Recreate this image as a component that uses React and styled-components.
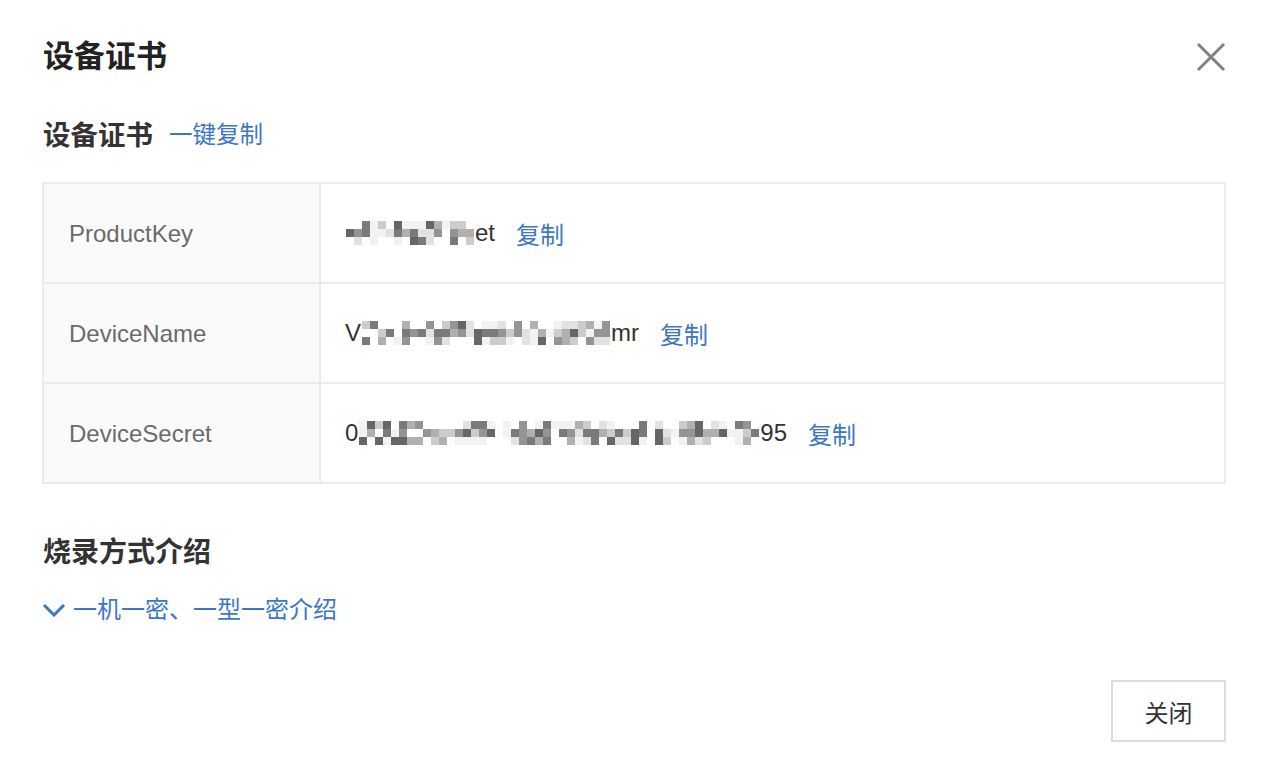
import React from "react";
import styled, { createGlobalStyle } from "styled-components";

const GlobalStyle = createGlobalStyle`
  body {
    margin: 0;
    background: #fff;
    font-family: "Liberation Sans", "Noto Sans CJK SC", sans-serif;
  }
`;

const rows = [
  { label: "ProductKey", head: "", tail: "et", cells: 16, seed: 3 },
  { label: "DeviceName", head: "V", tail: "mr", cells: 31, seed: 11 },
  { label: "DeviceSecret", head: "0", tail: "95", cells: 50, seed: 29 },
];

// blurred value, drawn as a pixel mosaic
function Mosaic({ cells, seed }) {
  let s = seed;
  const rand = () => {
    s = (s * 9301 + 49297) % 233280;
    return s / 233280;
  };
  const shades = ["#ffffff", "#f2f2f2", "#e2e2e2", "#cccccc", "#b0b0b0", "#949494", "#7a7a7a", "#666666"];
  const rects = [];
  for (let r = 0; r < 3; r++) {
    for (let c = 0; c < cells; c++) {
      const v = rand();
      const idx = r === 1 ? Math.floor(v * shades.length) : Math.floor(v * v * shades.length);
      rects.push(<rect key={r + "-" + c} x={c * 8} y={r * 8} width="8" height="8" fill={shades[idx]} />);
    }
  }
  return (
    <MosaicSvg width={cells * 8} height="24" viewBox={`0 0 ${cells * 8} 24`}>
      {rects}
    </MosaicSvg>
  );
}

export default function App() {
  return (
    <Page>
      <GlobalStyle />
      <Header>
        <Title>设备证书</Title>
        <CloseIcon width="30" height="30" viewBox="0 0 30 30">
          <path d="M2 2 L28 28 M28 2 L2 28" stroke="#808080" strokeWidth="3" fill="none" />
        </CloseIcon>
      </Header>

      <SubHeader>
        <SubTitle>设备证书</SubTitle>
        <Link>一键复制</Link>
      </SubHeader>

      <Table>
        {rows.map((row) => (
          <Row key={row.label}>
            <Label>{row.label}</Label>
            <Value>
              {row.head}
              <Mosaic cells={row.cells} seed={row.seed} />
              {row.tail}
              <CopyLink>复制</CopyLink>
            </Value>
          </Row>
        ))}
      </Table>

      <Section>烧录方式介绍</Section>
      <Toggle>
        <svg width="24" height="14" viewBox="0 0 24 14">
          <polyline points="2,2 12,12 22,2" stroke="#3c77c6" strokeWidth="3" fill="none" />
        </svg>
        一机一密、一型一密介绍
      </Toggle>

      <Footer>
        <Button>关闭</Button>
      </Footer>
    </Page>
  );
}

const Page = styled.div`
  padding: 37px 44px 0 42px;
  color: #333;
`;

const Header = styled.div`
  display: flex;
  justify-content: space-between;
  align-items: center;
  height: 40px;
  padding-left: 1px;
`;

const Title = styled.h1`
  margin: 0;
  font-size: 31px;
  line-height: 40px;
  font-weight: 600;
  color: #222;
`;

const CloseIcon = styled.svg`
  display: block;
  margin-right: 0;
`;

const SubHeader = styled.div`
  display: flex;
  align-items: center;
  gap: 16px;
  margin-top: 38px;
  height: 36px;
  padding-left: 1px;
`;

const SubTitle = styled.h2`
  margin: 0;
  font-size: 27.5px;
  font-weight: 600;
  color: #333;
`;

const Link = styled.span`
  font-size: 23.5px;
  color: #3c77c6;
`;

const Table = styled.div`
  margin-top: 31px;
  border: 2px solid #ebebeb;
`;

const Row = styled.div`
  display: grid;
  grid-template-columns: 277px 1fr;
  height: 98px;
  & + & {
    border-top: 2px solid #ebebeb;
  }
`;

const Label = styled.div`
  display: flex;
  align-items: center;
  padding-left: 25px;
  padding-top: 2px;
  background: #fafafa;
  border-right: 2px solid #ebebeb;
  font-size: 24px;
  color: #6b6b6b;
`;

const Value = styled.div`
  display: flex;
  align-items: center;
  padding-left: 24px;
  font-size: 24px;
  color: #333;
`;

const MosaicSvg = styled.svg`
  display: block;
  margin: 0 1px;
`;

const CopyLink = styled.span`
  margin-left: 21px;
  color: #3c77c6;
`;

const Section = styled.h3`
  margin: 51px 0 0 1px;
  font-size: 28px;
  line-height: 36px;
  font-weight: 600;
  color: #333;
`;

const Toggle = styled.div`
  display: flex;
  align-items: center;
  gap: 7px;
  margin-top: 23px;
  padding-left: 0;
  font-size: 24px;
  line-height: 32px;
  color: #3c77c6;
`;

const Footer = styled.div`
  display: flex;
  justify-content: flex-end;
  margin-top: 54px;
`;

const Button = styled.button`
  width: 115px;
  height: 62px;
  border: 2px solid #dcdcdc;
  background: #fff;
  font-family: "Liberation Sans", "Noto Sans CJK SC", sans-serif;
  font-size: 24px;
  color: #333;
`;
